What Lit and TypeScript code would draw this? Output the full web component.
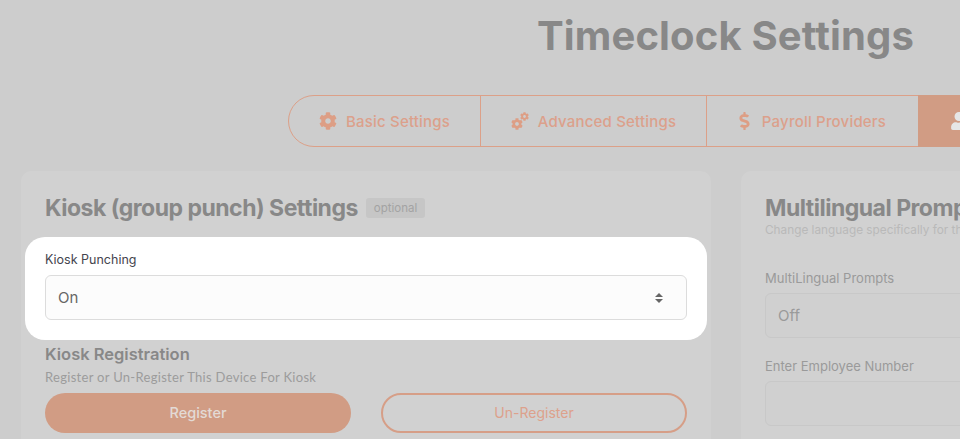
import { LitElement, html, css, svg } from "lit";
import { customElement } from "lit/decorators.js";

const COG = "M487.4 315.7l-42.6-24.6c4.3-23.2 4.3-47 0-70.2l42.6-24.6c4.9-2.8 7.1-8.6 5.5-14-11.1-35.6-30-67.8-54.7-94.6-3.8-4.1-10-5.1-14.8-2.3L380.8 110c-17.9-15.4-38.5-27.3-60.8-35.1V25.8c0-5.6-3.9-10.5-9.4-11.7-36.7-8.2-74.3-7.8-109.2 0-5.5 1.2-9.4 6.1-9.4 11.7V75c-22.2 7.9-42.8 19.8-60.8 35.1L88.7 85.5c-4.9-2.8-11-1.9-14.8 2.3-24.7 26.7-43.6 58.9-54.7 94.6-1.7 5.4.6 11.2 5.5 14L67.3 221c-4.3 23.2-4.3 47 0 70.2l-42.6 24.6c-4.9 2.8-7.1 8.6-5.5 14 11.1 35.6 30 67.8 54.7 94.6 3.8 4.1 10 5.1 14.8 2.3l42.6-24.6c17.9 15.4 38.5 27.3 60.8 35.1v49.2c0 5.6 3.9 10.5 9.4 11.7 36.7 8.2 74.3 7.8 109.2 0 5.5-1.2 9.4-6.1 9.4-11.7v-49.2c22.2-7.9 42.8-19.8 60.8-35.1l42.6 24.6c4.9 2.8 11 1.9 14.8-2.3 24.7-26.7 43.6-58.9 54.7-94.6 1.5-5.5-.7-11.3-5.6-14.1zM256 336c-44.1 0-80-35.9-80-80s35.9-80 80-80 80 35.9 80 80-35.9 80-80 80z";
const DOLLAR = "M209.2 233.4l-108-31.6C88.7 198.2 80 186.5 80 173.5c0-16.3 13.2-29.5 29.5-29.5h66.3c12.2 0 24.2 3.7 34.2 10.5 6.1 4.1 14.3 3.1 19.5-2l34.8-34c7.1-6.9 6.1-18.4-1.8-24.5C238 74.8 207.4 64.1 176 64V16c0-8.8-7.2-16-16-16h-32c-8.8 0-16 7.2-16 16v48h-2.5C45.8 64-5.4 118.7.5 183.6c4.2 46.1 39.4 83.6 83.8 96.6l102.5 30c12.5 3.7 21.2 15.3 21.2 28.3 0 16.3-13.2 29.5-29.5 29.5h-66.3C100 368 88 364.3 78 357.5c-6.1-4.1-14.3-3.1-19.5 2l-34.8 34c-7.1 6.9-6.1 18.4 1.8 24.5 24.5 19.2 55.1 29.9 86.5 30v48c0 8.8 7.2 16 16 16h32c8.8 0 16-7.2 16-16v-48.2c46.6-.9 90.3-28.6 105.7-72.7 21.5-61.6-14.6-124.8-72.5-141.7z";
const USER = "M224 256c70.7 0 128-57.3 128-128S294.7 0 224 0 96 57.3 96 128s57.3 128 128 128zm89.6 32h-16.7c-22.2 10.2-46.9 16-72.9 16s-50.6-5.8-72.9-16h-16.7C60.2 288 0 348.2 0 422.4V464c0 26.5 21.5 48 48 48h352c26.5 0 48-21.5 48-48v-41.6c0-74.2-60.2-134.4-134.4-134.4z";

const cogIcon = html`<svg class="ic" width="18" height="18" viewBox="0 0 512 512"><path d=${COG}></path></svg>`;
const cogsIcon = html`<svg class="ic" width="18" height="18" viewBox="0 0 18 18">
  ${svg`<g transform="translate(0 6) scale(0.0234)"><path d=${COG}></path></g>
  <g transform="translate(9 0) scale(0.0176)"><path d=${COG}></path></g>`}
</svg>`;
const dollarIcon = html`<svg class="ic dollar" width="11" height="18" viewBox="0 0 288 512"><path d=${DOLLAR}></path></svg>`;
const userIcon = html`<svg class="ic" width="16" height="18" viewBox="0 0 448 512"><path d=${USER}></path></svg>`;
const sortIcon = html`<svg class="sort" width="8" height="10" viewBox="0 0 8 10"><path d="M4 0L8 4H0ZM0 6H8L4 10Z"></path></svg>`;

@customElement("app-root")
export class AppRoot extends LitElement {
  static styles = css`
    :host {
      display: block;
      width: 960px;
      height: 439px;
      overflow: hidden;
      background: #cdcdcd;
      font-family: "Inter", "Liberation Sans", sans-serif;
    }
    .title {
      margin: 0;
      height: 95px;
      padding: 11px 46px 0 0;
      box-sizing: border-box;
      text-align: right;
      font: 700 40px/50px "Inter", sans-serif;
      letter-spacing: 0.15px;
      color: #888888;
    }
    .tabs {
      display: flex;
      width: 801px;
      height: 52px;
      margin-left: 288px;
      box-sizing: border-box;
      border: 1px solid #dca088;
      border-radius: 26px 0 0 26px;
    }
    .tab {
      display: flex;
      flex: none;
      align-items: center;
      justify-content: center;
      gap: 9px;
      box-sizing: border-box;
      border-right: 1px solid #dca088;
      font: 500 15px "Inter", sans-serif;
      letter-spacing: 0.2px;
      color: #dca08b;
      fill: #dd9e85;
    }
    .dollar { margin-right: 3px; }
    .t1 { width: 192px; }
    .t2 { width: 226px; }
    .t3 { width: 211px; border-right: none; }
    .t4 {
      width: 170px;
      margin: -1px 0;
      justify-content: flex-start;
      padding-left: 33px;
      background: #d19c84;
      color: #e6e6e6;
      fill: #e6e6e6;
      border: none;
    }
    .cards {
      display: grid;
      grid-template-columns: 690px 690px;
      gap: 30px;
      margin: 24px 0 0 21px;
    }
    .card {
      height: 300px;
      padding: 23px 24px 24px;
      box-sizing: border-box;
      background: #d1d1d1;
      border-radius: 10px;
    }
    .heading {
      display: flex;
      align-items: center;
      gap: 8px;
      margin: 0;
      height: 28px;
      font: 700 23px/28px "Inter", sans-serif;
      letter-spacing: -0.5px;
      color: #888888;
      white-space: nowrap;
    }
    .badge {
      padding: 0 8px;
      height: 20px;
      border-radius: 3px;
      background: #c6c6c6;
      color: #a3a3a3;
      letter-spacing: 0;
      font: 400 11.5px/20px "Inter", sans-serif;
    }
    .focus {
      margin: 15px -20px 0;
      height: 103px;
      padding: 15px 20px 0;
      box-sizing: border-box;
      background: #ffffff;
      border-radius: 20px;
    }
    .label {
      display: block;
      font: 400 12.5px/16px "Inter", sans-serif;
      color: #44444e;
    }
    .select {
      display: flex;
      align-items: center;
      justify-content: space-between;
      margin-top: 7px;
      height: 45px;
      padding: 0 23px 0 12px;
      box-sizing: border-box;
      border: 1px solid #dcdcdc;
      border-radius: 6px;
      background: #fcfcfc;
      font: 400 15px "Inter", sans-serif;
      color: #666666;
    }
    .sort { fill: #666666; }
    .sub-heading {
      margin: 3px 0 0;
      font: 600 16.5px/22px "Inter", sans-serif;
      color: #888888;
    }
    .hint {
      margin: 4px 0 0;
      font: 400 13px/16px "Lato", sans-serif;
      letter-spacing: 0.3px;
      color: #9c9c9c;
    }
    .actions {
      display: grid;
      grid-template-columns: 306px 306px;
      gap: 30px;
      margin-top: 8px;
    }
    .btn {
      height: 40px;
      box-sizing: border-box;
      border-radius: 20px;
      display: flex;
      align-items: center;
      justify-content: center;
      padding-bottom: 1px;
      font: 500 14.5px "Inter", sans-serif;
    }
    .primary { background: #d19c84; color: #e3dad5; }
    .outline { border: 2px solid #d69e87; color: #dda18c; font-weight: 400; font-size: 14px; }
    .desc {
      margin: 1px 0 0;
      height: 14px;
      font: 400 11.8px/14px "Inter", sans-serif;
      color: #b9b9b9;
      white-space: nowrap;
    }
    .field-label {
      display: block;
      font: 400 13px/16px "Inter", sans-serif;
      color: #9a9a9a;
    }
    .ghost {
      height: 45px;
      margin-top: 7px;
      padding: 0 12px;
      display: flex;
      align-items: center;
      box-sizing: border-box;
      border: 1px solid #c8c8c8;
      border-radius: 6px;
      background: #d0d0d0;
      font: 400 15px "Inter", sans-serif;
      color: #9a9a9a;
    }
    .f1 { margin-top: 33px; }
    .f2 { margin-top: 20px; }
  `;

  render() {
    return html`
      <h1 class="title">Timeclock Settings</h1>
      <nav class="tabs">
        <div class="tab t1">${cogIcon}<span>Basic Settings</span></div>
        <div class="tab t2">${cogsIcon}<span>Advanced Settings</span></div>
        <div class="tab t3">${dollarIcon}<span>Payroll Providers</span></div>
        <div class="tab t4">${userIcon}<span>Kiosk Settings</span></div>
      </nav>
      <div class="cards">
        <section class="card">
          <h2 class="heading">Kiosk (group punch) Settings <span class="badge">optional</span></h2>
          <div class="focus">
            <span class="label">Kiosk Punching</span>
            <div class="select"><span>On</span>${sortIcon}</div>
          </div>
          <h3 class="sub-heading">Kiosk Registration</h3>
          <p class="hint">Register or Un-Register This Device For Kiosk</p>
          <div class="actions">
            <div class="btn primary">Register</div>
            <div class="btn outline">Un-Register</div>
          </div>
        </section>
        <section class="card">
          <h2 class="heading">Multilingual Prompts</h2>
          <p class="desc">Change language specifically for this kiosk</p>
          <span class="field-label f1">MultiLingual Prompts</span>
          <div class="ghost">Off</div>
          <span class="field-label f2">Enter Employee Number</span>
          <div class="ghost"></div>
        </section>
      </div>
    `;
  }
}
